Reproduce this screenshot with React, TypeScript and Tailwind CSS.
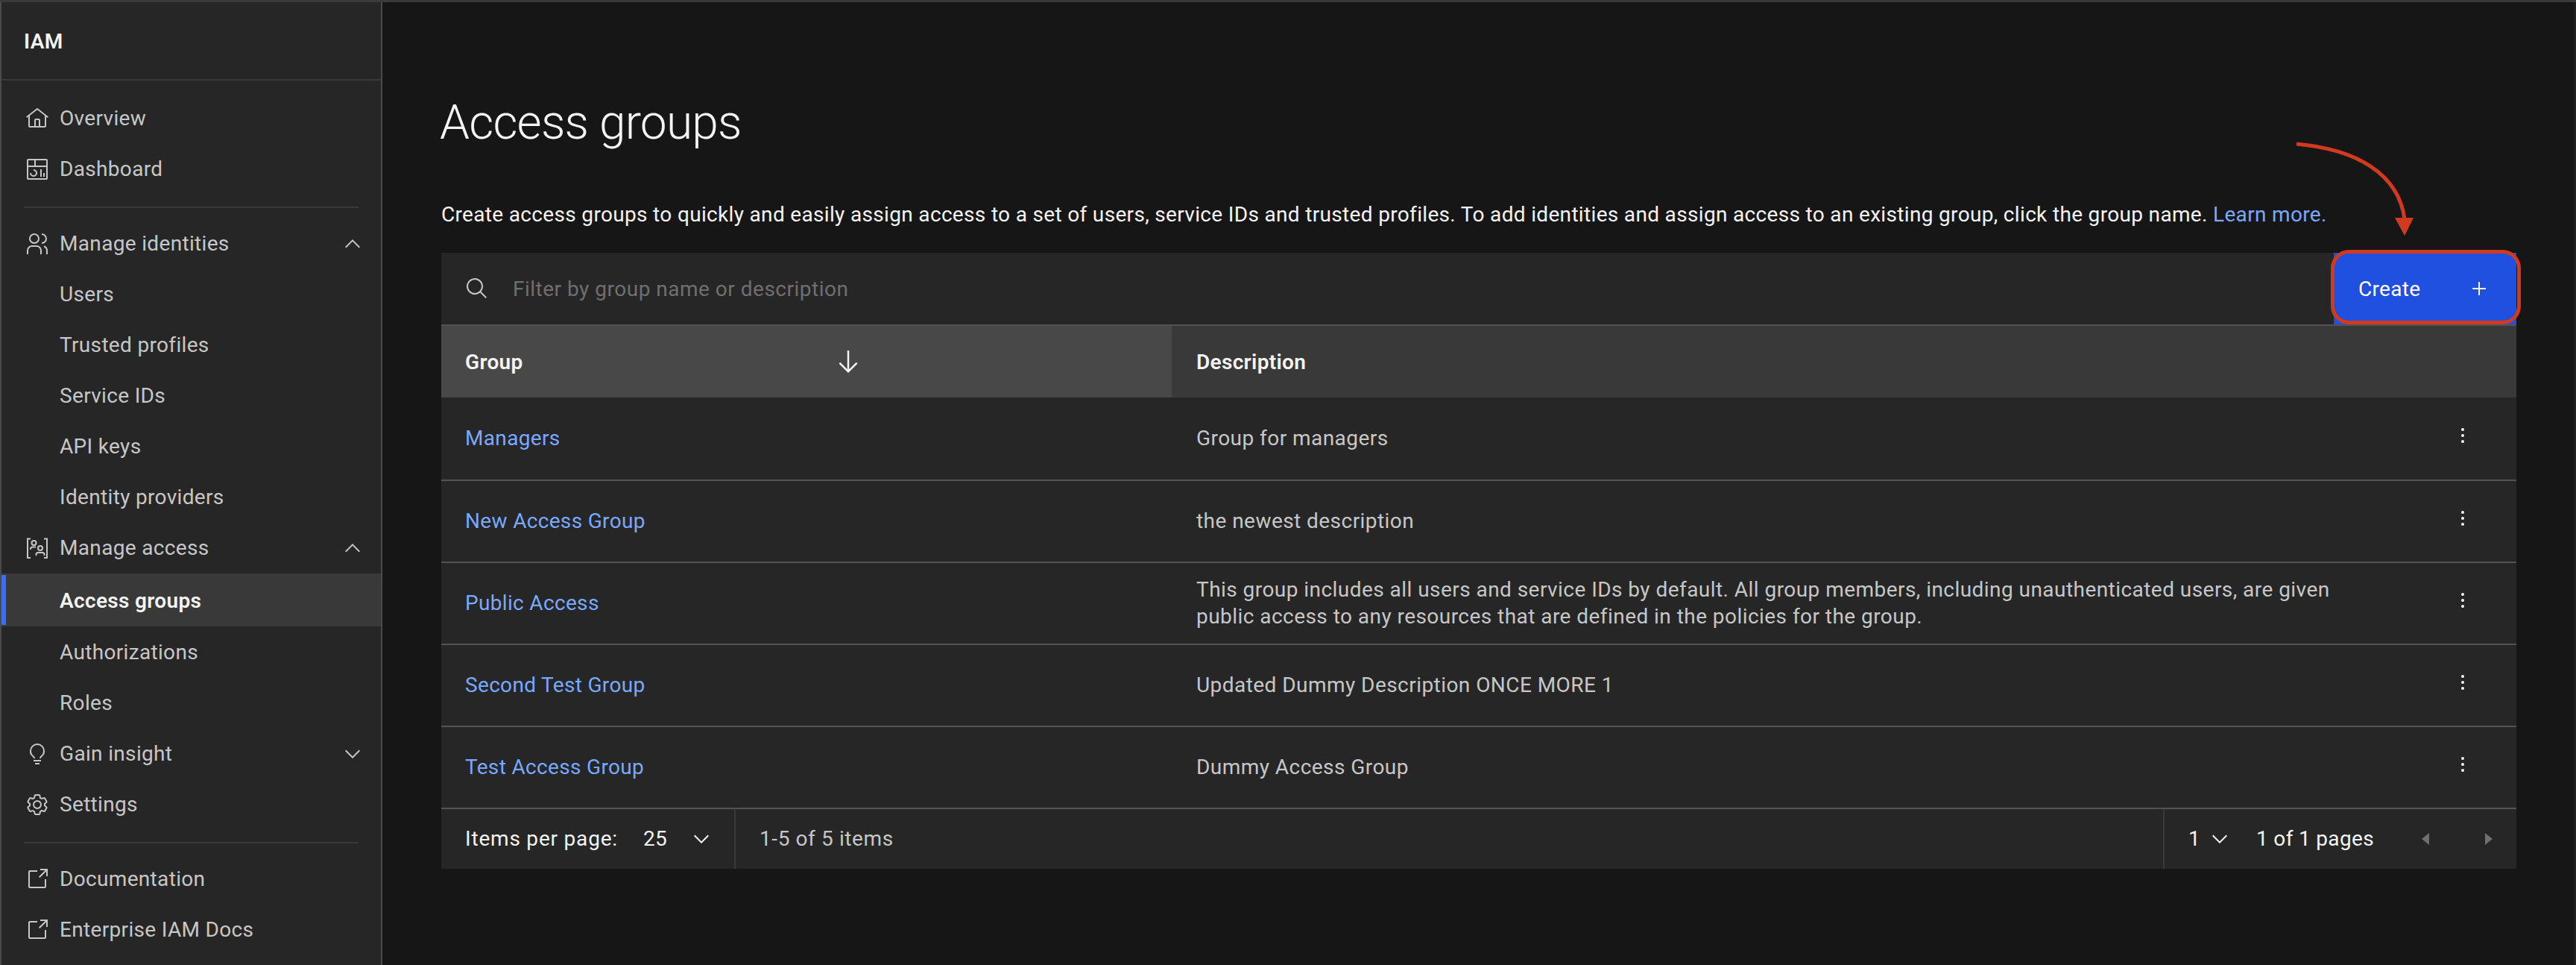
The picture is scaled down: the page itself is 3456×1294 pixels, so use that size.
import React from "react";

const I = ({ d, s = 32, c = "" }: { d: string; s?: number; c?: string }) => (
  <svg viewBox="0 0 32 32" width={s} height={s} fill="currentColor" className={"shrink-0 " + c}>
    <path d={d} />
  </svg>
);

const home = "M16.6123,2.2138a1.01,1.01,0,0,0-1.2427,0L1,13.4194l1.2427,1.5717L4,13.6209V26a2.0041,2.0041,0,0,0,2,2H26a2.0037,2.0037,0,0,0,2-2V13.63L29.7573,15,31,13.4282ZM18,26H14V18h4Zm2,0V18a2.0023,2.0023,0,0,0-2-2H14a2.002,2.002,0,0,0-2,2v8H6V12.0615l10-7.79,10,7.8005V26Z";
const dash = "M24 21H26V26H24zM20 16H22V26H20zM11 26a5.0059 5.0059 0 0 1-5-5H8a3 3 0 1 0 3-3V16a5 5 0 0 1 0 10zM28 2H4A2.002 2.002 0 0 0 2 4V28a2.0023 2.0023 0 0 0 2 2H28a2.0027 2.0027 0 0 0 2-2V4A2.0023 2.0023 0 0 0 28 2Zm0 9H14V4H28ZM12 4v7H4V4ZM4 28V13H28.0007l.0013 15Z";
const users = "M12 4a5 5 0 1 1-5 5 5 5 0 0 1 5-5m0-2a7 7 0 1 0 7 7A7 7 0 0 0 12 2zM22 30H20V25a5 5 0 0 0-5-5H9a5 5 0 0 0-5 5v5H2V25a7 7 0 0 1 7-7h6a7 7 0 0 1 7 7zM22 2v2a5 5 0 0 1 0 10v2a7 7 0 0 0 0-14zM30 30H28V25a5 5 0 0 0-3-4.58V18.2A7 7 0 0 1 30 25z";
const idea = "M11 24H21V26H11zM13 28H19V30H13zM16 2A10 10 0 0 0 6 12a9.19 9.19 0 0 0 3.46 7.62c1 .93 1.54 1.46 1.54 2.38h2c0-1.84-1.11-2.87-2.19-3.86A7.2 7.2 0 0 1 8 12a8 8 0 0 1 16 0 7.2 7.2 0 0 1-2.82 6.14c-1.07 1-2.18 2-2.18 3.86h2c0-.92.53-1.45 1.54-2.39A9.18 9.18 0 0 0 26 12 10 10 0 0 0 16 2Z";
const gear = "M27,16.76c0-.25,0-.5,0-.76s0-.51,0-.77l1.92-1.68A2,2,0,0,0,29.3,11L26.94,7a2,2,0,0,0-1.73-1,2,2,0,0,0-.64.1l-2.43.82a11.35,11.35,0,0,0-1.31-.75l-.51-2.52a2,2,0,0,0-2-1.61H13.64a2,2,0,0,0-2,1.61l-.51,2.52a11.48,11.48,0,0,0-1.32.75L7.43,6.06A2,2,0,0,0,6.79,6,2,2,0,0,0,5.06,7L2.7,11a2,2,0,0,0,.41,2.51L5,15.24c0,.25,0,.5,0,.76s0,.51,0,.77L3.11,18.45A2,2,0,0,0,2.7,21L5.06,25a2,2,0,0,0,1.73,1,2,2,0,0,0,.64-.1l2.43-.82a11.35,11.35,0,0,0,1.31.75l.51,2.52a2,2,0,0,0,2,1.61h4.72a2,2,0,0,0,2-1.61l.51-2.52a11.48,11.48,0,0,0,1.32-.75l2.42.82a2,2,0,0,0,.64.1,2,2,0,0,0,1.73-1L29.3,21a2,2,0,0,0-.41-2.51ZM25.21,24l-3.43-1.16a8.86,8.86,0,0,1-2.71,1.57L18.36,28H13.64l-.71-3.55a9.36,9.36,0,0,1-2.7-1.57L6.79,24,4.43,20l2.72-2.4a8.9,8.9,0,0,1,0-3.13L4.43,12,6.79,8l3.43,1.16a8.86,8.86,0,0,1,2.71-1.57L13.64,4h4.72l.71,3.55a9.36,9.36,0,0,1,2.7,1.57L25.21,8,27.57,12l-2.72,2.4a8.9,8.9,0,0,1,0,3.13L27.57,20ZM16,22a6,6,0,1,1,6-6A5.94,5.94,0,0,1,16,22Zm0-10a3.91,3.91,0,0,0-4,4,3.91,3.91,0,0,0,4,4,3.91,3.91,0,0,0,4-4A3.91,3.91,0,0,0,16,12Z";
const launch = "M26,28H6a2.0027,2.0027,0,0,1-2-2V6A2.0027,2.0027,0,0,1,6,4H16V6H6V26H26V16h2V26A2.0027,2.0027,0,0,1,26,28ZM20 2 20 4 26.586 4 18 12.586 19.414 14 28 5.414 28 12 30 12 30 2 20 2Z";
const chevDown = "M16 22L6 12l1.4-1.4 8.6 8.6 8.6-8.6L26 12z";
const chevUp = "M16 10L26 20l-1.4 1.4-8.6-8.6-8.6 8.6L6 20z";
const search = "M29 27.5859l-7.5521-7.5521a11.0177 11.0177 0 1 0-1.4141 1.4141L27.5859 29ZM4 13a9 9 0 1 1 9 9A9.01 9.01 0 0 1 4 13Z";
const arrowDown = "M24.59 16.59L17 24.17V4h-2v20.17l-7.59-7.58L6 18l10 10 10-10-1.41-1.41z";
const plus = "M17 15V7H15V15H7V17H15V25H17V17H25V15H17Z";

const Access = () => (
  <svg viewBox="0 0 32 32" width={32} height={32} fill="none" stroke="currentColor" strokeWidth={2} className="shrink-0">
    <path d="M7 3.5H3V29H7M25 3.5H29V29H25" />
    <circle cx="11.5" cy="9" r="3" />
    <path d="M7 18v-1a2.5 2.5 0 0 1 2.5-2.5H14" />
    <circle cx="20" cy="16" r="3" />
    <path d="M14.5 26v-1.5A2.5 2.5 0 0 1 17 22h6a2.5 2.5 0 0 1 2.5 2.5V26" />
  </svg>
);

const Kebab = () => (
  <svg viewBox="0 0 32 32" width={32} height={32} fill="#f4f4f4" className="shrink-0 mb-[8px]">
    <circle cx="16" cy="8" r="2" />
    <circle cx="16" cy="16" r="2" />
    <circle cx="16" cy="24" r="2" />
  </svg>
);

type Item = { label: string; icon?: React.ReactNode; chev?: "up" | "down"; active?: boolean };

const NavRow = ({ label, icon, chev, active }: Item) =>
  active ? (
    <div className="h-[71px] mb-[1px] pt-[3px] bg-[#393939] flex items-center relative pl-[78px] text-[#f4f4f4] font-semibold">
      <div className="absolute left-0 top-[2px] bottom-[2px] w-[6px] bg-[#3c6df0]" />
      {label}
    </div>
  ) : (
    <div className="h-[68px] flex items-center pl-[32px] pr-[22px] text-[#c6c6c6]">
      <div className="w-[32px] mr-[14px] shrink-0">{icon}</div>
      <span className="flex-1">{label}</span>
      {chev && <I d={chev === "up" ? chevUp : chevDown} />}
    </div>
  );

const rows: [string, React.ReactNode][] = [
  ["Managers", "Group for managers"],
  ["New Access Group", "the newest description"],
  [
    "Public Access",
    <>
      This group includes all users and service IDs by default. All group members, including unauthenticated users, are given
      <br />
      public access to any resources that are defined in the policies for the group.
    </>,
  ],
  ["Second Test Group", "Updated Dummy Description ONCE MORE 1"],
  ["Test Access Group", "Dummy Access Group"],
];

export default function App() {
  return (
    <div className="w-[3456px] h-[1294px] overflow-hidden bg-[#161616] flex text-[28px] leading-[36px] tracking-[0.33px] relative border-t-[3px] border-[#3a3a3a]" style={{ fontFamily: '"Roboto", "Liberation Sans", sans-serif' }}>
      <aside className="w-[513px] shrink-0 bg-[#262626] border-l-[2px] border-r-[2px] border-[#4a4a4a] text-[#c6c6c6]">
        <div className="h-[105px] flex items-center pl-[30px] pt-[2px] border-b-[2px] border-[#393939] text-[#f4f4f4] font-semibold">IAM</div>
        <div className="pt-[17px]">
          <NavRow label="Overview" icon={<I d={home} />} />
          <NavRow label="Dashboard" icon={<I d={dash} />} />
          <div className="mx-[30px] mt-[16px] mb-[14px] h-[2px] bg-[#393939]" />
          <NavRow label="Manage identities" icon={<I d={users} />} chev="up" />
          <NavRow label="Users" />
          <NavRow label="Trusted profiles" />
          <NavRow label="Service IDs" />
          <NavRow label="API keys" />
          <NavRow label="Identity providers" />
          <NavRow label="Manage access" icon={<Access />} chev="up" />
          <NavRow label="Access groups" active />
          <NavRow label="Authorizations" />
          <NavRow label="Roles" />
          <NavRow label="Gain insight" icon={<I d={idea} />} chev="down" />
          <NavRow label="Settings" icon={<I d={gear} />} />
          <div className="mx-[30px] mt-[16px] mb-[14px] h-[2px] bg-[#393939]" />
          <NavRow label="Documentation" icon={<I d={launch} />} />
          <NavRow label="Enterprise IAM Docs" icon={<I d={launch} />} />
        </div>
      </aside>

      <main className="flex-1 pl-[79px] pr-[77px] text-[#f4f4f4] border-r-[3px] border-[#1f1f1f]">
        <h1 className="text-[64px] leading-[80px] font-light tracking-[-0.8px] mt-[122px] -ml-[2px]">Access groups</h1>
        <p className="mt-[65px] h-[36px] whitespace-nowrap">
          Create access groups to quickly and easily assign access to a set of users, service IDs and trusted profiles. To add identities and assign access to an existing group, click the group name.{" "}
          <span className="text-[#78a9ff]">Learn more.</span>
        </p>
        <div className="mt-[33px] bg-[#262626]">
          <div className="h-[96px] flex items-center">
            <div className="flex-1 flex items-center pl-[32px] text-[#6f6f6f]">
              <span className="text-[#c6c6c6]"><I d={search} /></span>
              <span className="ml-[32px] pt-[2px] tracking-[0.5px]">Filter by group name or description</span>
            </div>
            <div className="w-[245px] h-full bg-[#2050e0] flex items-center justify-between pl-[33px] pr-[8px] text-white">
              <span className="pt-[1px]">Create</span>
              <I d={plus} c="mr-[26px]" />
            </div>
          </div>
          <div className="h-[98px] bg-[#393939] border-t-[2px] border-[#525252] flex items-center font-semibold">
            <div className="w-[980px] h-full bg-[#484848] flex items-center pl-[32px] pr-[414px] justify-between">
              <span className="pt-[2px]">Group</span>
              <I d={arrowDown} s={40} />
            </div>
            <div className="pl-[33px] pt-[2px]">Description</div>
          </div>
          {rows.map(([g, desc], i) => (
            <div key={i} className={(i === 0 ? "h-[112px] " : "h-[110px] ") + "flex items-center border-b-[2px] border-[#525252]"}>
              <div className="w-[980px] pl-[32px] text-[#78a9ff]">{g}</div>
              <div className="flex-1 pl-[33px] text-[#c6c6c6] whitespace-nowrap tracking-[0.45px]">{desc}</div>
              <div className="mr-[56px]"><Kebab /></div>
            </div>
          ))}
          <div className="h-[80px] flex items-center">
            <div className="w-[395px] h-full flex items-center pl-[32px] border-r-[2px] border-[#393939]">
              <span className="w-[239px] tracking-[0.8px]">Items per page:</span>
              <span className="w-[62px]">25</span>
              <I d={chevDown} />
            </div>
            <div className="flex-1 pl-[32px] text-[#c6c6c6] tracking-[0.6px]">1-5 of 5 items</div>
            <div className="w-[474px] h-full flex items-center border-l-[2px] border-[#393939] pl-[32px]">
              <span className="w-[26px]">1</span>
              <I d={chevDown} />
              <span className="ml-[33px] w-[212px]">1 of 1 pages</span>
              <span className="text-[#6f6f6f] flex gap-[51px]">
                <I d="M20 8L10 16l10 8z" />
                <I d="M12 8l10 8-10 8z" />
              </span>
            </div>
          </div>
        </div>
      </main>

      <svg className="absolute left-0 top-[-3px] pointer-events-none" width="3456" height="1294" fill="none">
        <path d="M3081 193C3160 200 3218 232 3226 294" stroke="#d13a1f" strokeWidth="5" />
        <path d="M3213 292H3238L3226 316Z" fill="#d13a1f" />
        <rect x="3129.5" y="337.5" width="250" height="95" rx="22" stroke="#d13a1f" strokeWidth="5" />
      </svg>
    </div>
  );
}
